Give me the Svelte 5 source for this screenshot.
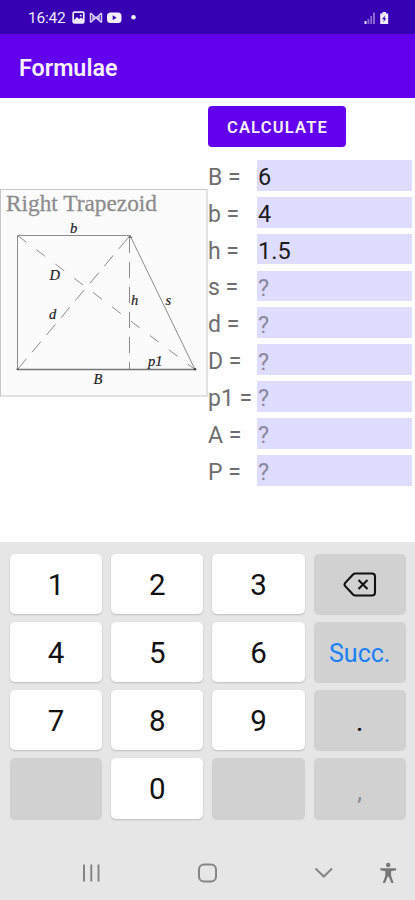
<script lang="ts">
    let fields = $state([
        { name: 'B', value: '6' },
        { name: 'b', value: '4' },
        { name: 'h', value: '1.5' },
        { name: 's', value: '' },
        { name: 'd', value: '' },
        { name: 'D', value: '' },
        { name: 'p1', value: '' },
        { name: 'A', value: '' },
        { name: 'P', value: '' }
    ]);

    let active = $state(0);

    const keys = ['1', '2', '3', 'del', '4', '5', '6', 'Succ.', '7', '8', '9', '.', '', '0', ' ', ','];

    function isDigit(key: string) {
        return key >= '0' && key <= '9';
    }

    function press(key: string) {
        const field = fields[active];
        if (key === 'del') {
            field.value = field.value.slice(0, -1);
        } else if (key === 'Succ.') {
            active = (active + 1) % fields.length;
        } else if (isDigit(key) || key === '.') {
            field.value += key;
        }
    }

    // Solves the trapezoid from both bases and the height
    function calculate() {
        const [B, b, h] = fields.slice(0, 3).map((f) => parseFloat(f.value));
        if (!B || !b || !h) return;
        const p1 = B - b;
        const s = Math.hypot(p1, h);
        const results = [s, Math.hypot(b, h), Math.hypot(B, h), p1, ((B + b) * h) / 2, B + b + h + s];
        results.forEach((r, i) => { fields[i + 3].value = String(Math.round(r * 1000) / 1000); });
    }
</script>

<div class="screen">
    <div class="status">
        <span class="time">16:42</span>
        <svg class="icons" width="70" height="14" viewBox="0 0 70 14">
            <rect x="1.2" y="1.2" width="10.6" height="10.6" rx="1" fill="none" stroke="#eee8ff" stroke-width="1.7" />
            <path d="M2 11V9l3-3 2 2 2-1.5 2.5 2V11z" fill="#eee8ff" />
            <circle cx="8.8" cy="4.5" r="1" fill="#eee8ff" />
            <path d="M18.5 2v9.5M29.5 2v9.5M18.5 2l5.5 5 5.5-5M18.5 11.5l5.5-5 5.5 5M21 4v6M27 4v6" fill="none" stroke="#d8cdf4" stroke-width="1.5" />
            <rect x="35" y="1.5" width="14.5" height="10.5" rx="3.5" fill="#f4efff" />
            <path d="M40.7 4.3v4.8l4-2.4z" fill="#3700b3" />
            <circle cx="61.5" cy="6.2" r="2.3" fill="#f4efff" />
        </svg>
        <svg class="signal" width="26" height="14" viewBox="0 0 26 14">
            <path d="M.5 10h2v3h-2z" fill="#e6ddfa" />
            <path d="M3.5 8h1.8v5H3.5zM6.3 5h1.8v8H6.3zM9 1.5h2V13H9z" fill="#8b6bd0" />
            <path d="M18.5 2.5V1H22v1.5h2.2V13h-8V2.5z" fill="#f0ebff" />
            <path d="M21 4.5l-3 3.8h2l-.7 3 3-4h-1.8z" fill="#3700b3" />
        </svg>
    </div>
    <header><h1>Formulae</h1></header>

    <main>
        <svg class="figure" width="208" height="208" viewBox="0 0 208 208">
            <rect x="0.5" y="0.5" width="206.5" height="206.5" fill="#fbfbfb" stroke="#c6c6c6" />
            <text class="title" x="6" y="22" textLength="151" lengthAdjust="spacingAndGlyphs">Right Trapezoid</text>
            <g fill="none" stroke="#8c8c8c">
                <path d="M17.5 180.5V46.5H130L195 180.5" />
                <path d="M17.5 180.5H195" stroke="#777" stroke-width="1.4" />
                <path d="M17.5 46.5L195 180.5" stroke-dasharray="11 12.7" />
                <path d="M17.5 180.5L130 46.5" stroke-dasharray="14 8.5" />
                <path d="M129.5 48V180.5" stroke-dasharray="16 9" />
            </g>
            <path d="M127.5 49l2.5-3 2.5 3z" fill="#777" />
            <circle cx="195" cy="180.3" r="1.3" fill="#444" />
            <circle cx="17.5" cy="180.3" r="1" fill="#555" />
            <g class="sides">
                <text x="70" y="43.5">b</text>
                <text x="49.5" y="91">D</text>
                <text x="49" y="130">d</text>
                <text x="131" y="115.5">h</text>
                <text x="165.5" y="115.5">s</text>
                <text x="148" y="177">p1</text>
                <text x="93.5" y="195">B</text>
            </g>
        </svg>

        <div class="form">
            <button class="calculate" onclick={calculate}>CALCULATE</button>
            {#each fields as field, i}
                <div class="row">
                    <label for="f-{field.name}">{field.name} =</label>
                    <input id="f-{field.name}" bind:value={field.value} placeholder="?" onfocus={() => (active = i)} />
                </div>
            {/each}
        </div>
    </main>

    <div class="keyboard">
        <div class="keys">
            {#each keys as key}
                <button class="key" class:digit={isDigit(key)} class:next={key === 'Succ.'} class:comma={key === ','} onclick={() => press(key)}>
                    {#if key === 'del'}
                        <svg width="34" height="26" viewBox="0 0 34 26" fill="none" stroke="#111" stroke-width="2.1" stroke-linejoin="round">
                            <path d="M12.5 1.5H29a3 3 0 0 1 3 3v16a3 3 0 0 1-3 3H12.5q-1.500 0-2.500-1L2.200 14.100Q.9 12.500 2.200 10.900L10 2.500q1-1 2.500-1z" />
                            <path d="M15.500 8l9 9M24.500 8l-9 9" />
                        </svg>
                    {:else}
                        {key}
                    {/if}
                </button>
            {/each}
        </div>
        <nav>
            <svg width="415" height="40" viewBox="0 0 415 40" fill="none" stroke="#858585" stroke-width="2">
                <path d="M84 11.5v17M91.3 11.5v17M98.5 11.5v17" />
                <rect x="199" y="11.5" width="17" height="17" rx="5" />
                <path d="M315.5 15.5l8.3 8 8.3-8" />
                <circle cx="388.2" cy="12" r="2.2" fill="#777" stroke="none" />
                <path d="M380.3 15.2h15.8v2l-5 1v4.5l2.6 7.3h-2.4l-2.5-6.3h-1.2l-2.5 6.3h-2.4l2.6-7.3v-4.5l-5-1z" fill="#777" stroke="none" />
            </svg>
        </nav>
    </div>
</div>

<style>
    :global(body) { margin: 0; background: #fefefe; }

    .screen {
        width: 415px;
        height: 900px;
        display: flex;
        flex-direction: column;
        overflow: hidden;
        font-family: Roboto, sans-serif;
        background: #fefefe;
    }

    .status {
        height: 34px;
        box-sizing: border-box;
        display: flex;
        align-items: center;
        padding: 1px 25px 0 28px;
        background: #3700b3;
    }

    .time { width: 44px; color: #eee8ff; font-size: 15.5px; letter-spacing: -0.2px; }
    .signal { margin-left: auto; }

    header {
        height: 64px;
        box-sizing: border-box;
        display: flex;
        align-items: center;
        padding: 4px 0 0 19px;
        background: #6200ee;
    }

    h1 { margin: 0; color: #f6f0ff; font-size: 23.3px; font-weight: 600; }

    main { flex: 1; display: flex; align-items: flex-start; }

    .figure { flex: none; margin-top: 91px; }
    .title { font: 23.5px "Liberation Serif", serif; fill: #8c8c8c; stroke: #8c8c8c; stroke-width: 0.3; }
    .sides { font: italic 14.5px "Liberation Serif", serif; fill: #222; stroke: #222; stroke-width: 0.2; }

    .form { flex: none; width: 204px; }

    .calculate {
        display: block;
        width: 138px;
        height: 41px;
        margin: 8px 0 13px;
        padding: 1px 0 0 1px;
        border: none;
        border-radius: 4px;
        background: #6200ee;
        color: #f6f0ff;
        font: 600 16.5px Roboto, sans-serif;
        letter-spacing: 1.2px;
    }

    .row { display: flex; align-items: center; height: 30.8px; margin-bottom: 6.05px; }

    label { width: 49px; padding-top: 4px; color: #6e6e6e; font-size: 23px; white-space: nowrap; }

    input {
        flex: 1;
        min-width: 0;
        height: 100%;
        box-sizing: border-box;
        padding: 4px 0 0 1px;
        border: none;
        outline: none;
        background: #dedcff;
        color: #1c1b20;
        font: 23.5px Roboto, sans-serif;
    }

    input::placeholder { color: #8a889c; opacity: 1; }

    .keyboard { height: 358px; background: #e6e6e6; }

    .keys {
        display: grid;
        grid-template-columns: repeat(4, 92.3px);
        grid-auto-rows: 60.3px;
        gap: 7.8px 8.9px;
        padding: 12px 0 0 10px;
    }

    .key {
        display: flex;
        align-items: center;
        justify-content: center;
        padding: 2px 0 0;
        border: none;
        border-radius: 5px;
        background: #d1d1d1;
        box-shadow: 0 1px 1px #cfcfcf;
        color: #111;
        font: 400 29.5px Roboto, sans-serif;
    }

    .digit { background: #fefefe; box-shadow: 0 1px 2px #bdbdbd; }
    .next { color: #1a80f5; font-size: 25px; }
    .comma { color: #8a8a8a; font-size: 24px; padding-top: 8px; }

    nav { height: 40px; margin-top: 34px; }
    nav svg { display: block; }
</style>
